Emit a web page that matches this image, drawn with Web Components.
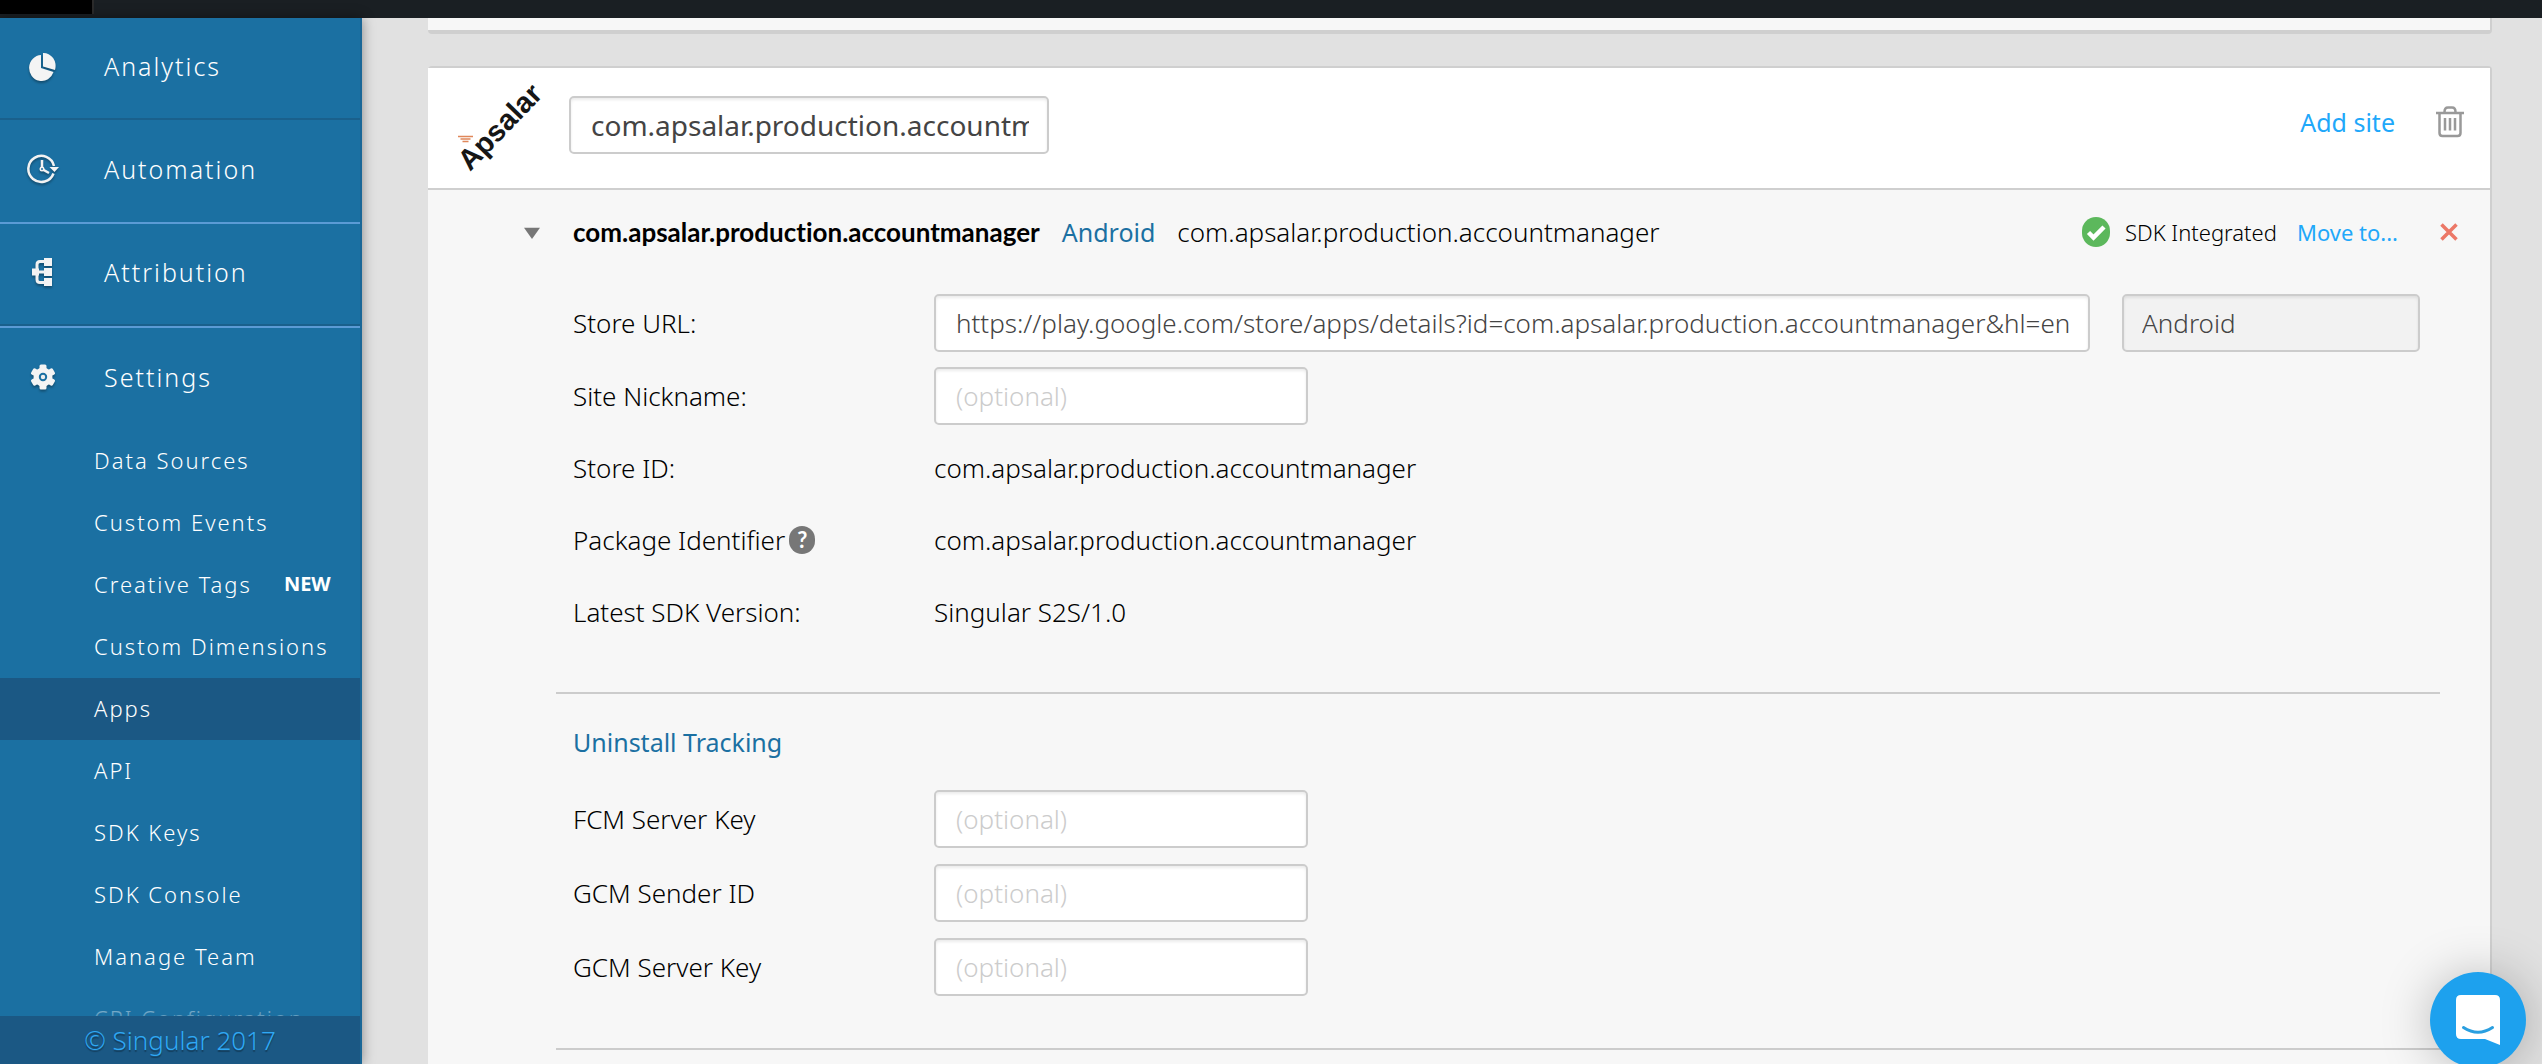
<!DOCTYPE html>
<html lang="en">
<head>
<meta charset="utf-8">
<title>Apps - Singular</title>
<style>
  html, body { margin: 0; height: 100%; }
  body {
    overflow: hidden;
    background: #e1e1e1;
    color: #000;
    font-family: "Noto Sans", "Open Sans", sans-serif;
    font-size: 26px;
    font-weight: 300;
    line-height: 36px;
  }
</style>
</head>
<body>
<app-shell>
  <side-bar slot="side">
    <nav-item icon="pie" divided>Analytics</nav-item>
    <nav-item icon="clock">Automation</nav-item>
    <nav-item icon="tree" lit divided>Attribution</nav-item>
    <nav-item icon="gear" lit>Settings</nav-item>
    <sub-item>Data Sources</sub-item>
    <sub-item>Custom Events</sub-item>
    <sub-item badge="NEW">Creative Tags</sub-item>
    <sub-item>Custom Dimensions</sub-item>
    <sub-item current>Apps</sub-item>
    <sub-item>API</sub-item>
    <sub-item>SDK Keys</sub-item>
    <sub-item>SDK Console</sub-item>
    <sub-item>Manage Team</sub-item>
    <sub-item>CPI Configuration</sub-item>
  </side-bar>
  <app-card name="com.apsalar.production.accountmanager">
    <site-header name="com.apsalar.production.accountmanager" platform="Android" bundle="com.apsalar.production.accountmanager"></site-header>
    <field-group>
      <field-row label="Store URL:" wide tall value="https://play.google.com/store/apps/details?id=com.apsalar.production.accountmanager&amp;hl=en" platform="Android"></field-row>
      <field-row label="Site Nickname:"></field-row>
      <info-row label="Store ID:">com.apsalar.production.accountmanager</info-row>
      <info-row label="Package Identifier" help>com.apsalar.production.accountmanager</info-row>
      <info-row label="Latest SDK Version:">Singular S2S/1.0</info-row>
    </field-group>
    <field-group heading="Uninstall Tracking">
      <field-row label="FCM Server Key" tall></field-row>
      <field-row label="GCM Sender ID" tall></field-row>
      <field-row label="GCM Server Key" tall></field-row>
    </field-group>
    <field-group></field-group>
  </app-card>
</app-shell>
<chat-launcher></chat-launcher>

<script>
const define = (name, render) => customElements.define(name, class extends HTMLElement {
  connectedCallback() {
    if (this.shadowRoot) return;
    const attr = (key) => (this.getAttribute(key) || '').replace(/&/g, '&amp;').replace(/"/g, '&quot;');
    this.attachShadow({ mode: 'open' }).innerHTML = render(attr, (key) => this.hasAttribute(key));
  }
});

const inputStyle = `
  input {
    box-sizing: border-box; height: 58px; margin: 0; padding: 0 18px 0 20px;
    border: 2px solid #ccc; border-radius: 5px; background: #fff; color: #444;
    font: inherit; min-width: 0; outline: none;
    box-shadow: inset 0 2px 3px rgba(0,0,0,.08);
  }
  input::placeholder { color: #ccc; opacity: 1; }
  input:disabled { background: #f2f2f2; color: #444; }
`;

define('app-shell', () => `
  <style>
    :host { display: flex; flex-direction: column; height: 100vh; }
    header { flex: none; height: 18px; background: #1a1f23; }
    header i { display: block; width: 92px; height: 14px; background: #000; border-right: 2px solid #2b2b2b; }
    .body { flex: 1; min-height: 0; display: flex; }
    main { flex: 1; min-width: 0; display: flex; flex-direction: column; gap: 32px; padding: 0 50px 0 66px; overflow: hidden; }
    .previous { flex: none; height: 12px; background: #f7f7f7; border: solid #cfcfcf; border-width: 0 2px 4px 0; border-radius: 0 0 4px 4px; }
  </style>
  <header><i></i></header>
  <div class="body"><slot name="side"></slot><main><div class="previous"></div><slot></slot></main></div>
`);

define('side-bar', () => `
  <style>
    :host { flex: none; display: flex; flex-direction: column; width: 360px; border-right: 2px solid #1a6797; background: #1b70a2; color: #fff; box-shadow: 0 0 12px rgba(0,0,0,.4); z-index: 1; }
    nav { flex: 1; min-height: 0; overflow: hidden; position: relative; }
    nav::after { content: ""; position: absolute; inset: auto 0 0 0; height: 24px; background: linear-gradient(rgba(27,112,162,.2), rgba(27,112,162,.7)); }
    footer { flex: none; height: 48px; line-height: 48px; text-align: center; background: #1b5884; color: #2fa9f5; text-shadow: 0 2px 1px rgba(0,0,0,.3); }
  </style>
  <nav><slot></slot></nav>
  <footer>© Singular 2017</footer>
`);

const tooth = [0, 60, 120, 180, 240, 300].map((a) => `<rect x="12.500" y="3.500" width="7" height="8" rx="1.500" transform="rotate(${a} 16 16)"/>`).join('');
const icons = {
  pie: '<path d="M14 4v13l12.500 4A12.500 13 0 1 1 14 4z" transform="translate(0 1)"/><path d="M16 3A12 13 0 0 1 28 20L16 16.500z"/>',
  clock: '<path d="M27 13A13 13 0 1 0 26.500 20.500" fill="none" stroke="#f2f2f2" stroke-width="2.500"/><path d="M15 7v9l7 4" fill="none" stroke="#f2f2f2" stroke-width="2.500"/><path d="M22.500 14H32l-4.500 5z"/><circle cx="15" cy="16" r="2.500"/><circle cx="15" cy="16" r="1" fill="#1b70a2"/>',
  tree: '<path d="M17 2h8v8h-8zM17 12h8v8h-8zM17 22h8v8h-8zM5 12.500h7v7H5z"/><path d="M18 5.500h-5q-3 0-3 3v15q0 3 3 3h5M10 16h9" fill="none" stroke="#f2f2f2" stroke-width="3"/>',
  gear: `<circle cx="16" cy="16" r="9.500"/>${tooth}<circle cx="16" cy="16" r="3.200" fill="#eee" stroke="#1b70a2" stroke-width="2"/>`
};

define('nav-item', (attr, has) => `
  <style>
    :host { display: block; }
    a { display: flex; align-items: center; gap: 45px; box-sizing: border-box; height: ${has('lit') ? 104 : 102}px; padding: 0 0 4px 27px; color: inherit; text-decoration: none; font-size: 25px; letter-spacing: 2px;
      ${has('lit') ? 'border-top: 2px solid #5b9bd5;' : ''} ${has('divided') ? 'border-bottom: 2px solid #1a608c;' : ''} }
    svg { flex: none; fill: #f4f4f4; filter: drop-shadow(0 2px 1px rgba(0,0,0,.3)); }
  </style>
  <a href="#"><svg width="32" height="32" viewBox="0 0 32 32" aria-hidden="true">${icons[attr('icon')]}</svg><slot></slot></a>
`);

define('sub-item', (attr, has) => `
  <style>
    :host { display: block; }
    a { display: flex; align-items: center; gap: 32px; box-sizing: border-box; height: 62px; padding: 0 0 2px 94px; color: inherit; text-decoration: none; font-size: 22px; line-height: 30px; letter-spacing: 2px; white-space: nowrap; ${has('current') ? 'background: #1b5884;' : ''} }
    b { font-size: 20px; font-weight: 700; letter-spacing: 0; }
  </style>
  <a href="#"><slot></slot>${has('badge') ? `<b>${attr('badge')}</b>` : ''}</a>
`);

define('app-card', (attr) => `
  <style>
    :host { flex: 1 0 auto; display: block; border: solid #cfcfcf; border-width: 2px 2px 0 0; border-radius: 4px 4px 0 0; background: #f7f7f7; }
    header { display: flex; align-items: center; box-sizing: border-box; height: 122px; padding: 0 26px 6px 16px; border-bottom: 2px solid #cfcfcf; background: #fff; }
    ${inputStyle}
    input { width: 480px; margin: 0 auto 0 17px; font-size: 28px; font-weight: 400; }
    .logo { flex: none; }
    .actions { display: flex; align-items: center; gap: 41px; padding-bottom: 6px; }
    .actions a { color: #1fa8fa; text-decoration: none; font-weight: 400; font-size: 25px; }
    button { display: block; padding: 0; border: 0; background: none; }
    button svg { display: block; }
  </style>
  <header>
    <svg class="logo" width="108" height="108" viewBox="0 0 108 108" role="img" aria-label="Apsalar logo">
      <text transform="translate(26 101) rotate(-46)" font-family="Liberation Sans, sans-serif" font-weight="700" font-size="29" fill="#161616">Apsalar</text>
      <path d="M14 65.500h15M16.500 68h10M18.500 70.500h6" stroke="#e0875a" stroke-width="1.500"/>
    </svg>
    <input aria-label="App name" value="${attr('name')}">
    <div class="actions">
      <a href="#">Add site</a>
      <button aria-label="Delete app"><svg width="28" height="32" viewBox="0 0 28 32" fill="none" stroke="#999" stroke-width="2.500"><path d="M0 7h28M3.500 7v20q0 3 3 3h15q3 0 3-3V7M8.500 6q0-4.500 3.500-4.500h4q3.500 0 3.500 4.500"/><path d="M9 12v12.500M14 12v12.500M19 12v12.500"/></svg></button>
    </div>
  </header>
  <slot></slot>
`);

define('site-header', (attr) => `
  <style>
    :host { display: flex; align-items: center; height: 84px; margin-bottom: 12px; padding: 0 32px 0 96px; }
    .toggle { width: 16px; height: 14px; margin-right: 33px; padding: 0; border: 0; background: #777; clip-path: polygon(0 20%, 100% 20%, 50% 100%); }
    b { font-family: Lato, sans-serif; font-weight: 700; font-variant-ligatures: none; margin-right: 22px; }
    .platform { color: #1b70a2; font-weight: 400; margin-right: 22px; font-size: 25px; }
    .bundle { margin-right: auto; }
    .status, .move { font-size: 22px; }
    .status { display: flex; align-items: center; gap: 15px; margin-right: 20px; }
    .move { color: #1fa8fa; text-decoration: none; font-weight: 400; margin-right: 42px; }
    .remove { padding: 0; border: 0; background: none; }
    svg { display: block; }
  </style>
  <button class="toggle" aria-label="Collapse site"></button>
  <b>${attr('name')}</b>
  <span class="platform">${attr('platform')}</span>
  <span class="bundle">${attr('bundle')}</span>
  <span class="status"><svg width="28" height="30" viewBox="0 0 28 30" aria-hidden="true"><rect width="28" height="30" rx="14" fill="#5cb85c"/><path d="M6.500 15.500l5 5L22 10" fill="none" stroke="#fff" stroke-width="4.500"/></svg>SDK Integrated</span>
  <a class="move" href="#">Move to...</a>
  <button class="remove" aria-label="Remove site"><svg width="18" height="18" viewBox="0 0 18 18"><path d="M1.500 1.500l15 15M16.500 1.500l-15 15" stroke="#ec7867" stroke-width="3.500"/></svg></button>
`);

define('field-group', (attr, has) => `
  <style>
    :host { display: block; margin: 0 50px 0 128px; padding: 0 20px 44px 17px; }
    :host(:not(:first-of-type)) { padding-top: 30px; border-top: 2px solid #ccc; }
    h2 { margin: 0 0 22px; font: inherit; font-weight: 400; font-size: 25px; line-height: 36px; color: #1b70a2; }
  </style>
  ${has('heading') ? `<h2>${attr('heading')}</h2>` : ''}<slot></slot>
`);

define('field-row', (attr, has) => `
  <style>
    :host { display: flex; align-items: center; height: ${has('tall') ? 74 : 72}px; }
    label { flex: none; width: 361px; }
    ${inputStyle}
    #value { ${has('wide') ? 'flex: 1' : 'width: 374px'}; }
    .platform { width: 298px; margin-left: 32px; padding-left: 18px; }
  </style>
  <label for="value">${attr('label')}</label>
  <input id="value" placeholder="(optional)" value="${attr('value')}">
  ${has('platform') ? `<input class="platform" aria-label="Platform" value="${attr('platform')}" disabled>` : ''}
`);

define('info-row', (attr, has) => `
  <style>
    :host { display: flex; align-items: center; height: 72px; }
    .label { flex: none; display: flex; align-items: center; gap: 4px; width: 361px; }
    button { width: 26px; height: 28px; padding: 0; border: 0; border-radius: 13px; background: #777; color: #fff; font: 700 22px/28px Lato, sans-serif; }
  </style>
  <span class="label">${attr('label')}${has('help') ? '<button aria-label="Help">?</button>' : ''}</span>
  <span><slot></slot></span>
`);

define('chat-launcher', () => `
  <style>
    :host { position: fixed; right: 16px; bottom: -4px; z-index: 2; }
    button { display: grid; place-items: center; width: 96px; height: 96px; padding: 0; border: 0; border-radius: 50%; background: #1da1ee; box-shadow: 0 2px 50px rgba(0,0,0,.25); }
  </style>
  <button aria-label="Open chat"><svg width="44" height="50" viewBox="0 0 44 50"><path d="M5 0h34q5 0 5 5v45L29 44H5q-5 0-5-5V5q0-5 5-5z" fill="#fff"/><path d="M7.500 32.500q14.500 9.500 29 0" fill="none" stroke="#2a9fe0" stroke-width="3" stroke-linecap="round"/></svg></button>
`);
</script>
</body>
</html>
